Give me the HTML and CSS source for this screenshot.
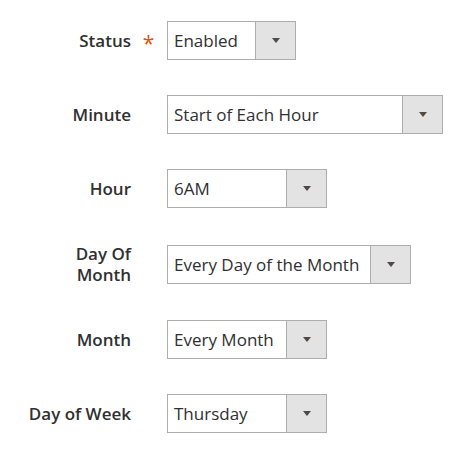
FILE: index.html
```html
<!DOCTYPE html>
<html>
<head>
<meta charset="utf-8">
<link rel="stylesheet" href="styles.css">
</head>
<body>
<div class="form">
  <div class="row">
    <div class="label">Status</div>
    <div class="req"><span class="star">*</span></div>
    <div class="select w-status"><span class="value">Enabled</span><span class="btn"><span class="arrow"></span></span></div>
  </div>
  <div class="row">
    <div class="label">Minute</div>
    <div class="req"></div>
    <div class="select w-minute"><span class="value">Start of Each Hour</span><span class="btn"><span class="arrow"></span></span></div>
  </div>
  <div class="row">
    <div class="label">Hour</div>
    <div class="req"></div>
    <div class="select w-hour"><span class="value">6AM</span><span class="btn"><span class="arrow"></span></span></div>
  </div>
  <div class="row">
    <div class="label">Day Of Month</div>
    <div class="req"></div>
    <div class="select w-dom"><span class="value">Every Day of the Month</span><span class="btn"><span class="arrow"></span></span></div>
  </div>
  <div class="row">
    <div class="label">Month</div>
    <div class="req"></div>
    <div class="select w-month"><span class="value">Every Month</span><span class="btn"><span class="arrow"></span></span></div>
  </div>
  <div class="row">
    <div class="label">Day of Week</div>
    <div class="req"></div>
    <div class="select w-week"><span class="value">Thursday</span><span class="btn"><span class="arrow"></span></span></div>
  </div>
</div>
</body>
</html>
```
FILE: styles.css
```css
html, body {
  margin: 0;
  padding: 0;
  background: #ffffff;
}
body {
  font-family: "Open Sans", "Liberation Sans", sans-serif;
  color: #303030;
}
.form {
  display: flex;
  flex-direction: column;
  gap: 35px;
  padding-top: 21px;
}
.row {
  display: flex;
  align-items: center;
}
.label {
  margin-left: 21px;
  width: 110px;
  text-align: right;
  font-size: 17px;
  font-weight: 600;
  line-height: 21px;
  color: #303030;
}
.req {
  width: 36px;
  display: flex;
  justify-content: center;
  align-self: stretch;
  align-items: center;
}
.star {
  color: #eb5202;
  font-size: 21px;
  line-height: 1;
  margin-top: 6px;
  margin-left: -1px;
}
.select {
  display: flex;
  height: 39px;
  box-sizing: border-box;
  border: 1px solid #adadad;
  background: #ffffff;
}
.value {
  flex: 1;
  display: flex;
  align-items: center;
  padding-left: 6px;
  font-size: 17px;
  color: #303030;
  white-space: nowrap;
}
.btn {
  width: 40px;
  box-sizing: border-box;
  border-left: 1px solid #adadad;
  background: #e3e3e3;
  display: flex;
  align-items: center;
  justify-content: center;
}
.arrow {
  width: 0;
  height: 0;
  border-left: 4.5px solid transparent;
  border-right: 4.5px solid transparent;
  border-top: 5px solid #514943;
}
.w-status { width: 129px; }
.w-minute { width: 276px; }
.w-hour { width: 160px; }
.w-dom { width: 244px; }
.w-month { width: 160px; }
.w-week { width: 160px; }
```
